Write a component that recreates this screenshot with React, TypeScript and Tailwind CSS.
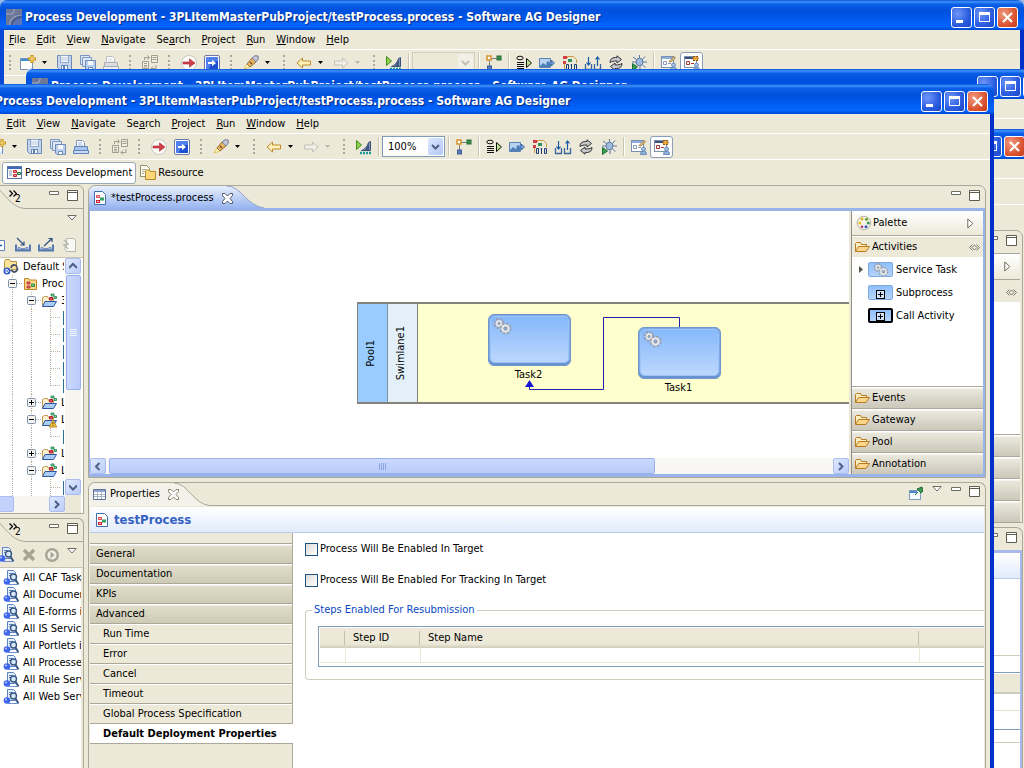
import { useId, type ReactNode } from "react";

/* ---------- icons ---------- */

function Svg({ w = 16, h = 16, children, className = "" }: { w?: number; h?: number; children: ReactNode; className?: string }) {
  return (
    <svg width={w} height={h} viewBox={`0 0 ${w} ${h}`} fill="none" aria-hidden="true" className={`shrink-0 ${className}`}>
      {children}
    </svg>
  );
}

const AppLogo = () => (
  <Svg>
    <rect width="16" height="16" fill="#4c5c86" />
    <path d="M0 0h16v5C9 5 5 9 4 16H0z" fill="#6d7897" />
    <path d="M0 5h5c2 0 3-1 3-5M4 16c0-6 5-10 12-10" stroke="#98a5c6" strokeWidth="1.2" />
    <path d="M7 16c0-4 4-7 9-7v7z" fill="#5a74b4" />
  </Svg>
);

const NewIcon = () => (
  <Svg>
    <rect x=".5" y="3.500" width="12" height="11" fill="#fff" stroke="#7a93b8" />
    <path d="M1 4h11v2H1z" fill="#3f8fd6" />
    <path d="M5 15c5 0 7-2 7-7v7z" fill="#cfe3f5" />
    <path d="M12 0v8M8 4h8" stroke="#c9921a" strokeWidth="3" />
    <path d="M12 1v6M9 4h6" stroke="#ffe68a" />
  </Svg>
);

const SaveIcon = () => (
  <Svg>
    <path d="M.5.5h14v14h-12l-2-2z" fill="#c4d5ec" stroke="#6d8bb8" />
    <rect x="3.500" y=".5" width="8" height="7" fill="#f4f8fd" stroke="#8fa8cb" />
    <path d="M4 3h7M4 5h7" stroke="#b8c9e0" />
    <rect x="4.500" y="10.500" width="6" height="4" fill="#f4f8fd" stroke="#6d8bb8" />
    <path d="M6 11h2v3H6z" fill="#5f7fb0" />
  </Svg>
);

const SaveAllIcon = () => (
  <Svg>
    <path d="M.5.5h9v9h-9z" fill="#dfe9f6" stroke="#7c97bf" />
    <path d="M2.500 2.500h9v9h-9z" fill="#dfe9f6" stroke="#7c97bf" />
    <path d="M5.500 5.500h10v10H7l-1.500-1.500z" fill="#bccfe9" stroke="#6d8bb8" />
    <path d="M8 6h5v4H8z" fill="#f4f8fd" />
    <path d="M8.500 12.500h4v3h-4z" fill="#fff" stroke="#6d8bb8" />
  </Svg>
);

const PrintIcon = ({ dim = false }: { dim?: boolean }) => (
  <Svg>
    <path d="M3.500 7.500v-6h6l2 2v4z" fill="#fff" stroke={dim ? "#b8bcc4" : "#7c97bf"} />
    <path d="M1.500 7.500h13v5h-13z" fill={dim ? "#dcdedf" : "#a9c3ec"} stroke={dim ? "#a9aeb6" : "#6183bb"} />
    <path d="M.5 11.500h15v3H.5z" fill={dim ? "#eceded" : "#c6d9f6"} stroke={dim ? "#a9aeb6" : "#6183bb"} />
    <path d="M5 4h4M5 6h5" stroke={dim ? "#d0d3d8" : "#a5bcdf"} />
  </Svg>
);

const TransformIcon = () => (
  <Svg>
    <path d="M9.500.5h6v7h-6zM.5 6.500h6v7h-6z" fill="#f2f0e4" stroke="#a19d8c" />
    <path d="M10.500 2.500h4M10.500 4.500h4M2 8.500h3M2 10.500h3M2 12h3" stroke="#a19d8c" />
    <path d="M2.500 5V2.500H7M5.500.5 7.500 2.500 5.500 4.500M14 10v3.500H9M11 11.500l-2 2 2 2" stroke="#a19d8c" />
  </Svg>
);

const StepRedIcon = () => (
  <Svg>
    <circle cx="8" cy="8" r="7.500" fill="#fbfbf8" stroke="#c9c8c0" />
    <path d="M2 7h6.500V3.800l5.500 4.200-5.500 4.200V9H2z" fill="#d0404a" stroke="#a82a34" strokeWidth=".6" />
  </Svg>
);

const StepBlueIcon = () => (
  <Svg>
    <rect x=".5" y=".5" width="15" height="15" rx="1.500" fill="#fff" stroke="#6a7aa4" />
    <rect x="2" y="2" width="12" height="12" fill="#1f4fd0" />
    <path d="M2 2h12v4c-5 0-8 2-9 8H2z" fill="#4f80ee" />
    <path d="M4 7h4V4.800L12 8l-4 3.200V9H4z" fill="#fff" />
  </Svg>
);

const TorchIcon = () => (
  <Svg>
    <path d="m1 14 3-5 3 3z" fill="#fff7c9" stroke="#e0c65a" />
    <path d="m4 9 5-6 4 4-6 5z" fill="#e8b464" stroke="#9c7040" />
    <path d="M9 3 12 .7l3.200.3.100 3L13 7z" fill="#c2c6d4" stroke="#7b7f96" />
    <path d="m7 7 2 2" stroke="#7a4e1c" strokeWidth="1.500" />
  </Svg>
);

const ArrowIcon = ({ dir, dim = false }: { dir: "l" | "r"; dim?: boolean }) => (
  <Svg>
    <path
      d={dir === "l" ? "M1 8l5.500-5v3H14.500v4H6.500v3z" : "M15 8L9.500 3v3H1.500v4h8v3z"}
      fill={dim ? "#f0efe8" : "#fdf0b8"}
      stroke={dim ? "#c3c1b6" : "#bd8a2d"}
    />
  </Svg>
);

const CompareIcon = () => (
  <Svg>
    <path d="M.5 1.500v9l5-4.500z" fill="#8fd34a" stroke="#3f8a1c" />
    <path d="M14.500 2.500v9H5.500c3-1 6-4 7-8z" fill="#7f97bb" stroke="#3a5278" />
    <path d="M9 11l4-7v7z" fill="#42597f" />
    <path d="M4 14h11" stroke="#1e9a98" strokeWidth="2.500" strokeDasharray="2 1" />
  </Svg>
);

const TreeIcon = () => (
  <Svg>
    <path d="M5 3.500h6M3.500 6v5" stroke="#7b7b74" />
    <rect x="1" y="1" width="4" height="4" fill="#fff" stroke="#d8902a" strokeWidth="1.500" />
    <rect x="11" y="1" width="4" height="4" fill="#3b8f4b" stroke="#276a36" />
    <rect x="1.500" y="11" width="4" height="4" fill="#5a7cbb" stroke="#3c5a94" />
  </Svg>
);

const StepsIcon = () => (
  <Svg>
    <ellipse cx="4" cy="3" rx="3.200" ry="1.800" stroke="#111" />
    <path d="M1 7.500h7M1 9.500h7M1 11.500h7M1 13.500h7" stroke="#111" strokeWidth="1.200" />
    <path d="M10.500 3.500v9l5-4.500z" fill="#b8e08a" stroke="#111" />
  </Svg>
);

const ExportImageIcon = () => (
  <Svg>
    <path d="M.5 3.500h11v9H.5z" fill="#b8d4f0" stroke="#5a82b2" />
    <path d="m1 12v-1l3-3 3 2 4-3v5z" fill="#4f7fb8" />
    <path d="M8 7h4.500V5l3 3-3 3V9H8z" fill="#6d9fdc" stroke="#2f5a94" strokeWidth=".7" />
  </Svg>
);

const BinaryIcon = () => (
  <Svg>
    <path d="M5.500 3V1.500h6l3 3V8M2.500 8v6" stroke="#c99a3c" />
    <path d="M1 1h4v3H1zM1 6h3v3H1z" fill="#d63c48" />
    <path d="M6 4h4v3H6z" fill="#31905a" />
    <path d="M4.500 9.500h2v5h-2zM9.500 9v6M12.500 9.500h2v5h-2zM8.500 10h1" stroke="#1c3b74" />
  </Svg>
);

const SyncTraysIcon = () => (
  <Svg w={18}>
    <path d="M1.500 9v5.500h6V9M10.500 9v5.500h6V9" stroke="#38659c" strokeWidth="1.300" />
    <path d="M4.500 2v8M2.500 7.500l2 2.500 2-2.500M13.500 11V2M11.500 4.500l2-2.500 2 2.500" stroke="#1c5aa6" strokeWidth="1.200" />
  </Svg>
);

const RefreshIcon = () => (
  <Svg>
    <path d="M2 7.500c0-3.500 2-5 5.500-5H9V.8l4.500 3.700L9 8V6c-3.500 0-5 .3-7 1.500z" fill="#c9c9cc" stroke="#303038" />
    <path d="M14 8.500c0 3.500-2 5-5.500 5H7v1.700L2.500 11.500 7 8v2c3.500 0 5-.3 7-1.500z" fill="#c9c9cc" stroke="#303038" />
  </Svg>
);

const BugIcon = () => (
  <Svg>
    <ellipse cx="8.500" cy="7" rx="3.500" ry="3.800" fill="#9fbce0" stroke="#5c78a6" />
    <path d="M8.500 3V0M5.500 4.500 2 2M5 7H1M11.500 4.500 14 1.500M12 7h4M11.500 10l3 2.500M9 11v4" stroke="#5c78a6" />
    <path d="M1.500 8.500v7l5-3.500z" fill="#35a050" stroke="#1f6f35" />
  </Svg>
);

const PerspectiveUserIcon = ({ gear = false }: { gear?: boolean }) => (
  <Svg>
    <rect x=".5" y="1.500" width="12" height="11" fill="#fff" stroke="#7d8fae" />
    <path d="M1 2h11v2H1z" fill={gear ? "#3a4f78" : "#8fb0dc"} />
    <path d="M2.500 6.500h3v3h-3zM7 8.500h3" stroke={gear ? "#a33" : "#8c9cb8"} />
    {gear ? (
      <path d="M9 1.500h5v4H9z" fill="#eda63b" stroke="#8b5412" strokeDasharray="2 1" />
    ) : (
      <path d="m8 6.500 5-5 1.500 1.500-4.500 4z" fill="#e9c27a" stroke="#8d7038" strokeWidth=".8" />
    )}
    <circle cx="12.500" cy="10" r="2" fill="#a9c3e4" stroke="#5c7fae" strokeWidth=".8" />
    <path d="M9.500 15.500c0-2.500 1-3.500 3-3.500s3 1 3 3.500z" fill="#8caed9" stroke="#5c7fae" strokeWidth=".8" />
  </Svg>
);

const ProcessPerspIcon = () => (
  <Svg>
    <rect x=".5" y="1.500" width="14" height="12" fill="#fff" stroke="#5a74a3" />
    <path d="M1 2h13v2H1z" fill="#3c67b8" />
    <path d="M2 6h3M2 8h3M2 10h3" stroke="#7e95bd" />
    <path d="M6.500 5.500h3v2h-3zM6.500 9.500h3v2h-3z" fill="#f5a0a6" stroke="#c4202e" />
    <path d="M10.500 7.500h3v2h-3z" fill="#9fd8b0" stroke="#1d7a41" />
  </Svg>
);

const ResourceIcon = () => (
  <Svg>
    <path d="M.5.5h6l3 3v8h-9z" fill="#fff" stroke="#9b8960" />
    <path d="M2 4.500h4M2 6.500h3M2 8.500h2" stroke="#b3a47c" />
    <path d="M5.500 6.500l1-1.500h3l1 1.500h5v8h-10z" fill="#fbd676" stroke="#b98a2c" />
  </Svg>
);

const ProcessFileIcon = () => (
  <Svg w={12} h={14}>
    <path d="M.5.5h8l3 3v10H.5z" fill="#fff" stroke="#3f6fae" />
    <path d="M2 4h4v3H2z" fill="#e0525e" />
    <path d="M2 9h4v3H2z" fill="#cf2233" />
    <path d="M6 6.500h4v3H6z" fill="#35a060" />
    <path d="M3 5h2v1H3zM3 10h2v1H3z" fill="#f7b6bb" />
  </Svg>
);

const CloseX = ({ dim = false }: { dim?: boolean }) => (
  <Svg w={11} h={11}>
    <path d="M.5.5h2.500L5.500 3 8 .5h2.500v2L8 5.500l2.500 3v2H8L5.500 8 3 10.500H.5v-2L3 5.500.5 2.500z" fill="#fff" stroke={dim ? "#85826f" : "#55586b"} />
  </Svg>
);

const ServiceFolder = () => (
  <Svg>
    <path d="M1.500 13V2.500l1-2h4l1 2h6V10z" fill="#fbe39b" stroke="#b8913c" />
    <circle cx="4" cy="12" r="3.500" fill="#3059d8" />
    <path d="M3 10.500h1.500l1 1.500-1 1.500H3z" stroke="#fff" />
    <path d="M8 9c1-4 5-4 6-1M14.500 8.500c0 5-5 6-6 2" stroke="#47506b" strokeWidth="1.800" />
  </Svg>
);

const ProjectFolder = () => (
  <Svg>
    <path d="M2.500 13.500V2.500h4l1 1.500h7v9.500z" fill="#fbd98a" stroke="#c08426" />
    <path d="M5 6h3v2H5zM5 10h3v2H5z" fill="#e0737a" stroke="#b02030" strokeWidth=".8" />
    <path d="M9.500 8h3v2.500h-3z" fill="#72c78a" stroke="#1b7a3c" strokeWidth=".8" />
  </Svg>
);

const OpenFolder = ({ warn = false }: { warn?: boolean }) => (
  <Svg>
    <path d="M1.500 13.500v-9l2-1h3l1 2h5v3" fill="#fdf0cf" stroke="#c19a55" />
    <path d="M1.500 13.500 4 8.500h11.500l-3 5z" fill="#a9cdf7" stroke="#2f57a0" />
    <path d="M8.500 4.500h3v2.500h-3z" fill="#ea5a68" stroke="#b01a2c" />
    <path d="M10 1h3v2h-3zM13 3.500h2.500v2H13z" fill="#7fd09a" stroke="#1f7d49" strokeWidth=".8" />
    {warn && <path d="m12 8 3.700 7H8.300z" fill="#ffd24a" stroke="#b9851a" />}
    {warn && <path d="M12 10.500v2M12 13.300v1" stroke="#503800" />}
  </Svg>
);

const DrawerFolder = () => (
  <Svg>
    <path d="M1.500 12.500v-8l1-1h4l1 2h5v2" fill="#fdeec0" stroke="#b77a22" />
    <path d="m1.500 12.500 3-5h11l-3.500 5z" fill="#fbd58a" stroke="#b77a22" />
  </Svg>
);

const QueryIcon = () => (
  <Svg>
    <path d="M4.500.5h6l2 2v9h-8z" fill="#e4effc" stroke="#5d83c2" />
    <path d="M6 3.500h4M6 5.500h3" stroke="#5d83c2" />
    <circle cx="10.500" cy="7" r="3" fill="#d6e8fb" stroke="#39567f" strokeWidth="1.400" />
    <path d="m12.500 9.500 3 5" stroke="#39567f" strokeWidth="2" />
    <circle cx="4" cy="11.500" r="3.300" fill="#3d66ec" />
    <circle cx="3" cy="10.500" r="1" fill="#b9caff" />
    <path d="M5 14.500h10" stroke="#6f8fd0" />
  </Svg>
);

const InTray = ({ out = false }: { out?: boolean }) => (
  <Svg>
    <path d="M1 7.500v6h14v-6" stroke="#5678b0" strokeWidth="2" />
    <path d="M3 12.500v-2h2l1 1h4l1-1h2v2z" fill="#9db8e0" stroke="#5678b0" strokeWidth=".7" />
    <path d={out ? "M6 9 14 1.500M10.500 1.500H14v3.500" : "M2 1l7 7M9 4.500V8H5.500"} stroke="#2f4d80" strokeWidth="1.200" />
  </Svg>
);

const ScrollDoc = () => (
  <Svg>
    <path d="M5.500 1.500h7l2 2v11h-9l-2-3 2-2z" fill="#f8f8f4" stroke="#b9b8ae" />
    <path d="m3 3 4 4-4 1 4 4" stroke="#b9b8ae" strokeWidth="1.500" />
  </Svg>
);

const PaletteIcon = () => (
  <Svg>
    <circle cx="8" cy="8" r="6.800" fill="#f6f3e6" stroke="#b5b2a2" />
    <circle cx="6" cy="4" r="1.500" fill="#e0b030" />
    <circle cx="10.500" cy="4.200" r="1.500" fill="#5aa02c" />
    <circle cx="12.300" cy="8" r="1.500" fill="#2f9a50" />
    <circle cx="10" cy="11.800" r="1.500" fill="#3458c8" />
    <circle cx="6" cy="11.800" r="1.400" fill="#b03a8a" />
    <circle cx="3.800" cy="8" r="1.500" fill="#e8c020" />
  </Svg>
);

const PinIcon = () => (
  <Svg w={14}>
    <rect x=".5" y="4.500" width="11" height="9" fill="#f4faff" stroke="#7d9cc0" />
    <path d="M1 5h7v2H1z" fill="#4b86cf" />
    <path d="m6 9 3-3M8 3l4 4 2-2-1-4z" fill="#3c9a50" stroke="#1f6a32" />
  </Svg>
);

const DrawerPin = () => (
  <Svg w={11} h={7}>
    <path d="M3.500.5.5 3.500l3 3M7.500.5l3 3-3 3M5.500 1 3 3.500 5.500 6 8 3.500z" stroke="#6f6d60" strokeWidth=".9" />
  </Svg>
);

const TriRight = () => (
  <Svg w={7} h={11}>
    <path d="M.8 1v9l5-4.500z" fill="#fff" stroke="#6f6d60" />
  </Svg>
);

const TriDown = () => (
  <Svg w={10} h={6}>
    <path d="M.8.5h8.400L5 5z" fill="#fff" stroke="#6f6d60" />
  </Svg>
);

const DropArrow = ({ dim = false }: { dim?: boolean }) => (
  <Svg w={5} h={3}>
    <path d="M0 0h5L2.500 3z" fill={dim ? "#b9b7aa" : "#000"} />
  </Svg>
);

const Gears = ({ big = false }: { big?: boolean }) => (
  <svg width={big ? 19 : 16} height={big ? 17 : 14} viewBox="0 0 19 17" fill="none" aria-hidden="true">
    <circle cx="6" cy="5.500" r="4" stroke="#9a9eaa" strokeWidth="3" strokeDasharray="1.800 1.340" />
    <circle cx="6" cy="5.500" r="3" fill="#f3f1ec" stroke="#e4e3e4" />
    <circle cx="6" cy="5.500" r="1.200" fill="#8fb4ea" stroke="#777c88" strokeWidth=".6" />
    <circle cx="12.500" cy="10.500" r="4.600" stroke="#9a9eaa" strokeWidth="3" strokeDasharray="2 1.610" />
    <circle cx="12.500" cy="10.500" r="3.800" fill="#f3f1ec" stroke="#e4e3e4" />
    <circle cx="12.500" cy="10.500" r="1.700" fill="#8fb4ea" stroke="#777c88" strokeWidth=".8" />
  </svg>
);

const PlusBox = () => (
  <Svg w={9} h={9}>
    <rect x=".5" y=".5" width="8" height="8" fill="#cfe3fd" stroke="#000" />
    <path d="M2 4.500h5M4.500 2v5" stroke="#000" />
  </Svg>
);

/* ---------- window frame ---------- */

function CaptionButtons() {
  const base = "flex h-[21px] w-[21px] items-center justify-center rounded-[3px] border border-white";
  return (
    <div className="flex gap-0.5">
      <button aria-label="Minimize" className={`${base} bg-[radial-gradient(circle_at_30%_30%,#6f97f8,#2a5be0_60%,#1c47c4)]`}>
        <Svg w={13} h={13}>
          <path d="M1 9h7v3H1z" fill="#fff" />
        </Svg>
      </button>
      <button aria-label="Maximize" className={`${base} bg-[radial-gradient(circle_at_30%_30%,#6f97f8,#2a5be0_60%,#1c47c4)]`}>
        <Svg w={13} h={13}>
          <path d="M1.500 2.500h10v8h-10z" stroke="#fff" />
          <path d="M1 1h11v3H1z" fill="#fff" />
        </Svg>
      </button>
      <button aria-label="Close" className={`${base} bg-[radial-gradient(circle_at_30%_30%,#f09a80,#dc5634_60%,#c23c1c)]`}>
        <Svg w={13} h={13}>
          <path d="m2 2 9 9M11 2l-9 9" stroke="#fff" strokeWidth="2" />
        </Svg>
      </button>
    </div>
  );
}

function DesktopWindow({ place, title, children }: { place: string; title?: string; children?: ReactNode }) {
  return (
    <section className={`absolute bottom-0 flex w-full flex-col overflow-hidden rounded-t-[7px] ${place}`}>
      <header className="flex h-[30px] shrink-0 items-center justify-between bg-[linear-gradient(#0a4fd0_0,#3f94fb_6%,#0b5fe8_14%,#0050dc_35%,#0057ec_60%,#0366ff_88%,#0048d0_100%)] pr-[6px] pl-[6px] pt-[4px]">
        <div className="flex items-center gap-[3px]">
          {title && <AppLogo />}
          {title && (
            <h1 className="text-[12px] leading-4 font-bold whitespace-nowrap text-white [text-shadow:1px_1px_1px_#0a2a80]">{title}</h1>
          )}
        </div>
        <CaptionButtons />
      </header>
      <div className="flex min-h-0 flex-1 flex-col border-x-4 border-l-[#0a48d8] border-r-[#0030c8] bg-[#ece9d8]">{children}</div>
    </section>
  );
}

const MENUS: [string, string, string][] = [
  ["", "F", "ile"],
  ["", "E", "dit"],
  ["", "V", "iew"],
  ["", "N", "avigate"],
  ["Se", "a", "rch"],
  ["", "P", "roject"],
  ["", "R", "un"],
  ["", "W", "indow"],
  ["", "H", "elp"],
];

function MenuBar() {
  return (
    <nav className="flex h-[19px] shrink-0 items-center gap-[11px] pl-[5px]">
      {MENUS.map(([a, b, c]) => (
        <button key={b + c} className="leading-[14px]">
          {a}
          <span className="underline">{b}</span>
          {c}
        </button>
      ))}
    </nav>
  );
}

/* ---------- tool bar ---------- */

function Tool({ label, children, pressed = false }: { label: string; children: ReactNode; pressed?: boolean }) {
  return (
    <button
      aria-label={label}
      className={`flex h-[22px] w-[23px] shrink-0 items-center justify-center ${pressed ? "rounded-[3px] border border-[#8ba0b8] bg-white" : ""}`}
    >
      {children}
    </button>
  );
}

const Drop = ({ label, dim }: { label: string; dim?: boolean }) => (
  <button aria-label={label} className="flex h-[22px] w-[14px] shrink-0 items-center pl-[3px]">
    <DropArrow dim={dim} />
  </button>
);

const Grip = ({ first = false }: { first?: boolean }) => (
  <span className={`flex shrink-0 justify-center ${first ? "w-3" : "w-4"}`}>
    <span className="h-[15px] border-l-2 border-dotted border-[#aca899]" />
  </span>
);

const Sep = () => (
  <span className="flex w-[7px] shrink-0 justify-center">
    <span className="h-[19px] border-r border-l border-r-white border-l-[#c9c5b2]" />
  </span>
);

function Toolbar({ zoom }: { zoom?: string }) {
  const off = !zoom;
  return (
    <div className="flex h-[26px] shrink-0 items-center border-t border-white">
      <Grip first />
      <Tool label="New"><NewIcon /></Tool>
      <Drop label="New options" />
      <Tool label="Save"><SaveIcon /></Tool>
      <Tool label="Save All"><SaveAllIcon /></Tool>
      <Tool label="Print"><PrintIcon dim={off} /></Tool>
      <Grip />
      <Tool label="Transform"><TransformIcon /></Tool>
      <Grip />
      <Tool label="Step"><StepRedIcon /></Tool>
      <Tool label="Run to end"><StepBlueIcon /></Tool>
      <Grip />
      <Tool label="Search"><TorchIcon /></Tool>
      <Drop label="Search options" />
      <Grip />
      <Tool label="Back"><ArrowIcon dir="l" /></Tool>
      <Drop label="Back history" />
      <Tool label="Forward"><ArrowIcon dir="r" dim /></Tool>
      <Drop label="Forward history" dim />
      <Grip />
      <Tool label="Analyze"><CompareIcon /></Tool>
      <Sep />
      <div className="relative flex shrink-0">
        <select
          aria-label="Zoom"
          disabled={off}
          className={`h-[21px] w-[63px] appearance-none rounded-none border pl-[5px] leading-[14px] outline-none ${off ? "border-[#d3d0c0] bg-[#ece9d8]" : "border-[#7f9db9] bg-white text-black"}`}
        >
          <option>{zoom ?? ""}</option>
        </select>
        <span
          className={`pointer-events-none absolute top-0.5 right-0.5 flex h-[17px] w-[15px] items-center justify-center rounded-[2px] ${off ? "bg-[#f2f0e6]" : "bg-[linear-gradient(135deg,#dbe6fe,#b4c8f6)]"}`}
        >
          <Svg w={9} h={6}>
            <path d="m1 1 3.500 3.500L8 1" stroke={off ? "#c5c2b3" : "#4d6185"} strokeWidth="2" />
          </Svg>
        </span>
      </div>
      <Sep />
      <Tool label="Layout"><TreeIcon /></Tool>
      <Sep />
      <Tool label="Steps"><StepsIcon /></Tool>
      <Tool label="Export image"><ExportImageIcon /></Tool>
      <Tool label="Generate"><BinaryIcon /></Tool>
      <Tool label="Synchronize"><SyncTraysIcon /></Tool>
      <Tool label="Refresh"><RefreshIcon /></Tool>
      <Tool label="Debug"><BugIcon /></Tool>
      <Sep />
      <Tool label="Analyst view"><PerspectiveUserIcon /></Tool>
      <Tool label="Developer view" pressed><PerspectiveUserIcon gear /></Tool>
    </div>
  );
}

/* ---------- view chrome ---------- */

const MinButton = () => (
  <button aria-label="Minimize view" className="mt-px shrink-0">
    <Svg w={10} h={4}>
      <path d="M.5.5h9v3h-9z" fill="#fff" stroke="#6f6d60" />
    </Svg>
  </button>
);

const MaxButton = () => (
  <button aria-label="Maximize view" className="shrink-0">
    <Svg w={11} h={11}>
      <path d="M.5.5h10v10H.5zM.5 2.500h10" fill="#fff" stroke="#5f5d50" />
    </Svg>
  </button>
);

const ViewButtons = () => (
  <div className="flex items-start gap-2">
    <MinButton />
    <MaxButton />
  </div>
);

function SideHeader() {
  return (
    <div className="relative flex h-6 shrink-0 items-start justify-between pt-1 pr-[5px] pl-[34px]">
      <svg className="absolute inset-0 h-full w-full" viewBox="0 0 108 24" preserveAspectRatio="none" fill="none" aria-hidden="true">
        <path d="M20 0c9 6 16 22 30 22.500H108" stroke="#aca899" />
      </svg>
      <button aria-label="Show 2 more views" className="relative flex items-start">
        <Svg w={8} h={7}>
          <path d="m.5.5 3 3-3 3M4.500.5l3 3-3 3" stroke="#000" strokeWidth="1.200" />
        </Svg>
        <span className="-ml-[2px] pt-[3px] text-[10px] leading-3">2</span>
      </button>
      <div className="relative">
        <ViewButtons />
      </div>
    </div>
  );
}

const chevrons = {
  left: "M5.500 1 2 4.500 5.500 8",
  right: "M2 1l3.500 3.500L2 8",
  up: "M0 6l4-4 4 4",
  down: "M0 2.500l4 4 4-4",
};

const ScrollButton = ({ dir }: { dir: keyof typeof chevrons }) => (
  <button
    aria-label={`Scroll ${dir}`}
    className="flex h-4 w-4 shrink-0 items-center justify-center rounded-[2px] border border-[#a9bdf0] bg-[linear-gradient(135deg,#dfe8ff,#b9ccfa)]"
  >
    <Svg w={8} h={9}>
      <path d={chevrons[dir]} stroke="#4d6185" strokeWidth="2" />
    </Svg>
  </button>
);

/* ---------- left column ---------- */

type Row = { level: number; kind: "root" | "project" | "folder" | "warn" | "leaf"; label?: string; open?: boolean; last?: boolean };

const TREE: Row[] = [
  { level: 0, kind: "root", label: "Default Server" },
  { level: 1, kind: "project", label: "Processes", open: true },
  { level: 2, kind: "folder", label: "3PLItemMaster", open: true },
  { level: 3, kind: "leaf" },
  { level: 3, kind: "leaf" },
  { level: 3, kind: "leaf" },
  { level: 3, kind: "leaf" },
  { level: 3, kind: "leaf", last: true },
  { level: 2, kind: "folder", label: "Loan", open: false },
  { level: 2, kind: "warn", label: "Loan", open: true },
  { level: 3, kind: "leaf", last: true },
  { level: 2, kind: "folder", label: "Loan", open: false },
  { level: 2, kind: "folder", label: "Loan", open: true },
  { level: 3, kind: "leaf" },
];

function TreeRow({ row }: { row: Row }) {
  const guides = Math.max(0, row.level - 1);
  return (
    <li className="flex h-[17px] items-center whitespace-nowrap">
      <span className="w-[19px] shrink-0" />
      {Array.from({ length: guides }, (_, i) => (
        <span key={i} className="flex h-full w-[19px] shrink-0 justify-center">
          <span className="border-l border-dotted border-[#b5b2a4]" />
        </span>
      ))}
      {row.level > 0 && (
        <span className="relative flex h-full w-[19px] shrink-0 items-center justify-center">
          <span className={`absolute top-0 left-[9px] border-l border-dotted border-[#b5b2a4] ${row.last ? "h-[9px]" : "h-full"}`} />
          <span className="absolute right-0 left-[9px] border-t border-dotted border-[#b5b2a4]" />
          {row.open !== undefined && (
            <button aria-label={row.open ? "Collapse" : "Expand"} className="relative">
              <Svg w={9} h={9}>
                <rect x=".5" y=".5" width="8" height="8" rx="1" fill="#f4f3ee" stroke="#7b90a8" />
                <path d={row.open ? "M2 4.500h5" : "M2 4.500h5M4.500 2v5"} stroke="#000" />
              </Svg>
            </button>
          )}
        </span>
      )}
      {row.kind === "root" && <ServiceFolder />}
      {row.kind === "project" && <ProjectFolder />}
      {row.kind === "folder" && <OpenFolder />}
      {row.kind === "warn" && <OpenFolder warn />}
      {row.kind === "leaf" && <span className="ml-[3px] h-[14px] w-3 border border-[#2f6f93] bg-white" />}
      {row.label && <span className="pl-1 leading-[14px]">{row.label}</span>}
    </li>
  );
}

const QUERIES = ["All CAF Tasks", "All Documents", "All E-forms in", "All IS Services", "All Portlets in", "All Processes", "All Rule Services", "All Web Services"];

function LeftColumn() {
  return (
    <div className="flex w-[110px] shrink-0 flex-col gap-1">
      <section className="flex h-[329px] shrink-0 flex-col overflow-hidden rounded-tr-[6px] border border-[#aca899]">
        <SideHeader />
        <div className="flex h-[48px] shrink-0 flex-col items-end justify-between border-b border-[#c8c4b2] pt-[5px] pr-[6px] pb-1">
          <button aria-label="View menu"><TriDown /></button>
          <div className="flex gap-[7px]">
            <button aria-label="Collapse all">
              <Svg>
                <path d="M1.500 3.500h11v10h-11z" fill="#fff" stroke="#5f86b4" />
                <path d="M4 8.500h6" stroke="#25539a" strokeWidth="1.500" />
              </Svg>
            </button>
            <button aria-label="Import"><InTray /></button>
            <button aria-label="Export"><InTray out /></button>
            <button aria-label="Script"><ScrollDoc /></button>
          </div>
        </div>
        <div className="flex min-h-0 flex-1 bg-white pr-0.5">
          <div className="flex min-w-0 flex-1 flex-col">
            <ul className="mr-px min-h-0 flex-1 overflow-hidden bg-white pl-[9px]">
              {TREE.map((r, i) => (
                <TreeRow key={i} row={r} />
              ))}
            </ul>
            <div className="flex h-[17px] shrink-0 items-start justify-between bg-[#f6f5f0]">
              <span className="h-4 w-[39px] rounded-[2px] border border-[#a9bdf0] bg-[#c3d2fb]" />
              <ScrollButton dir="right" />
            </div>
          </div>
          <div className="flex w-4 shrink-0 flex-col items-center bg-[#f6f5f0]">
            <ScrollButton dir="up" />
            <span className="mt-px flex h-[115px] w-[15px] flex-col items-center justify-center gap-px rounded-[2px] border border-[#98b0ee] bg-[linear-gradient(90deg,#cbd9ff,#b9cbfa)]">
              {[0, 1, 2, 3].map((i) => (
                <span key={i} className="h-px w-[7px] bg-[#eef3ff]" />
              ))}
            </span>
            <span className="flex-1" />
            <ScrollButton dir="down" />
            <span className="h-[18px] w-full bg-[#ece9d8]" />
          </div>
        </div>
      </section>

      <section className="flex min-h-0 flex-1 flex-col overflow-hidden rounded-tr-[6px] border border-b-0 border-[#aca899]">
        <SideHeader />
        <div className="flex h-[25px] shrink-0 items-center justify-end gap-[7px] border-b border-[#c8c4b2] pr-[6px]">
          <button aria-label="Queries"><QueryIcon /></button>
          <button aria-label="Remove">
            <Svg>
              <path d="m3 3 10 10M13 3 3 13" stroke="#a8a595" strokeWidth="3.500" />
            </Svg>
          </button>
          <button aria-label="Run query">
            <Svg>
              <circle cx="8" cy="8" r="5.800" fill="#f2f0e6" stroke="#a8a595" strokeWidth="2.500" />
              <path d="M6.500 4.500v7l4-3.500z" fill="#a8a595" />
            </Svg>
          </button>
          <button aria-label="View menu" className="mb-2"><TriDown /></button>
        </div>
        <ul className="mr-[2px] min-h-0 flex-1 overflow-hidden bg-white pt-px pl-[28px]">
          {QUERIES.map((q) => (
            <li key={q} className="flex h-[17px] items-center gap-1 leading-[14px] whitespace-nowrap">
              <QueryIcon />
              {q}
            </li>
          ))}
        </ul>
      </section>
    </div>
  );
}

/* ---------- palette ---------- */

const DRAWERS = ["Events", "Gateway", "Pool", "Annotation"];
const drawerClass = "flex h-[22px] shrink-0 items-center gap-0.5 border-t border-[#aca899] bg-[linear-gradient(#fff_0,#fff_1px,#eae7dc_2px,#cbc8ba_100%)]";

function Palette() {
  const tile = "flex h-[15px] w-[25px] items-center justify-center rounded-[2px] bg-[linear-gradient(#8fc0fd,#b5d3fb)]";
  return (
    <aside className="flex w-[132px] shrink-0 flex-col border-l border-[#8f8f8a] bg-white">
      <div className="flex h-[25px] shrink-0 items-center justify-between border-b border-[#aca899] bg-[linear-gradient(#fff,#ece9d8)] pr-[9px] pl-1">
        <h2 className="flex items-center gap-px">
          <PaletteIcon />
          Palette
        </h2>
        <button aria-label="Hide palette"><TriRight /></button>
      </div>
      <button className="mt-px flex h-5 shrink-0 items-center justify-between bg-[#ece9d8] pr-[3px] pl-0.5">
        <span className="flex items-center gap-0.5">
          <DrawerFolder />
          Activities
        </span>
        <DrawerPin />
      </button>
      <ul className="flex flex-1 flex-col pt-px">
        <li>
          <button className="flex h-[23px] items-center">
            <span className="flex w-4 justify-center pl-px">
              <Svg w={4} h={7}>
                <path d="M0 0v7l4-3.500z" fill="#55534a" />
              </Svg>
            </span>
            <span className={`${tile} border border-[#7fa9df]`}><Gears /></span>
            <span className="pl-[3px]">Service Task</span>
          </button>
        </li>
        <li>
          <button className="flex h-[23px] items-center pl-4">
            <span className={`${tile} border border-[#7fa9df] pt-[3px]`}><PlusBox /></span>
            <span className="pl-[3px]">Subprocess</span>
          </button>
        </li>
        <li>
          <button className="flex h-[23px] items-center pl-4">
            <span className={`${tile} border-2 border-black pt-px`}><PlusBox /></span>
            <span className="pl-[3px]">Call Activity</span>
          </button>
        </li>
      </ul>
      {DRAWERS.map((d) => (
        <button key={d} className={`${drawerClass} pl-0.5`}>
          <DrawerFolder />
          {d}
        </button>
      ))}
    </aside>
  );
}

/* ---------- process diagram ---------- */

function TaskNode({ name, place }: { name: string; place: string }) {
  return (
    <div className={`absolute flex w-[83px] flex-col items-center ${place}`}>
      <div className="h-[52px] w-full rounded-[6px] border border-[#6f97cc] bg-[#7ea9e4] p-[2px] shadow-[inset_0_-2px_0_#6792cf]">
        <div className="h-[45px] rounded-[4px] bg-[linear-gradient(#86b9fb,#bcd7fd)] pt-px pl-[2px] shadow-[0_0_0_1px_#9cc4f8]">
          <Gears big />
        </div>
      </div>
      <span className="pt-0.5 pr-0.5 leading-[14px]">{name}</span>
    </div>
  );
}

function Diagram() {
  return (
    <div className="relative min-h-0 flex-1 overflow-hidden bg-white">
      <div className="absolute top-[91px] right-0 left-[267px] flex h-[102px] border-2 border-r-0 border-l-[1px] border-[#83837c] bg-[#ffffce]">
        <div className="flex w-[30px] shrink-0 items-center justify-center border-r border-[#7d8ea3] bg-[#99ccff] pr-1">
          <span className="[writing-mode:vertical-rl] rotate-180">Pool1</span>
        </div>
        <div className="flex w-[30px] shrink-0 items-center justify-center border-r border-[#83837c] bg-[#e3eff9] pr-1">
          <span className="[writing-mode:vertical-rl] rotate-180">Swimlane1</span>
        </div>
      </div>
      <svg className="absolute top-[100px] left-[430px]" width="170" height="90" viewBox="0 0 170 90" fill="none" aria-hidden="true">
        <path d="M159.500 16V6.500H83.500V78.500H9.500V74" stroke="#2020b0" />
        <path d="M9.500 69 5 76h9z" fill="#1818d8" />
      </svg>
      <TaskNode name="Task2" place="top-[103px] left-[398px]" />
      <TaskNode name="Task1" place="top-[116px] left-[548px]" />
    </div>
  );
}

function Editor() {
  const id = useId();
  return (
    <section className="flex h-[293px] shrink-0 flex-col rounded-t-[7px] border border-[#aca899]">
      <div className="relative flex h-[22px] shrink-0 items-start justify-between pr-[5px] pl-[5px]">
        <svg className="absolute top-0 left-0" width="176" height="22" viewBox="0 0 176 22" aria-hidden="true">
          <defs>
            <linearGradient id={id} x1="0" y1="0" x2="0" y2="1">
              <stop offset="0" stopColor="#e8effc" />
              <stop offset="1" stopColor="#99b5f1" />
            </linearGradient>
          </defs>
          <path d="M0 22V7q0-7 7-7h131c14 0 20 20 37 22z" fill={`url(#${id})`} />
          <path d="M138 0c14 0 20 20 37 22" fill="none" stroke="#8fa3cc" />
        </svg>
        <div className="relative flex h-full items-center gap-2 pt-0.5">
          <h2 className="flex items-center gap-[5px]">
            <ProcessFileIcon />
            *testProcess.process
          </h2>
          <button aria-label="Close editor"><CloseX /></button>
        </div>
        <div className="pt-1"><ViewButtons /></div>
      </div>
      <div className="flex min-h-0 flex-1 border-[#99b4ea] border-t-[3px] border-r-2 border-b-[3px] border-l-[1px]">
        <div className="flex min-w-0 flex-1 flex-col">
          <Diagram />
          <div className="flex h-4 shrink-0 items-center bg-[#f8f7f3]">
            <ScrollButton dir="left" />
            <span className="ml-[3px] flex h-4 w-[72%] items-center justify-center gap-px rounded-[2px] border border-[#98b0ee] bg-[linear-gradient(#cbd9ff,#b9cbfa)]">
              {[0, 1, 2, 3].map((i) => (
                <span key={i} className="h-[7px] w-px bg-[#8ea6e0]" />
              ))}
            </span>
            <span className="flex-1" />
            <ScrollButton dir="right" />
          </div>
        </div>
        <span className="w-0.5 shrink-0 bg-[#ece9d8]" />
        <Palette />
      </div>
    </section>
  );
}

/* ---------- properties ---------- */

const SECTIONS = ["General", "Documentation", "KPIs", "Advanced"];
const SUBSECTIONS = ["Run Time", "Error", "Cancel", "Timeout", "Global Process Specification"];

function CheckRow({ id, label }: { id: string; label: string }) {
  return (
    <div className="flex h-[14px] items-center gap-[2px]">
      <input
        type="checkbox"
        id={id}
        className="m-0 h-[13px] w-[13px] shrink-0 appearance-none border border-[#1c5180] bg-[linear-gradient(135deg,#dcdcd7,#fff)]"
      />
      <label htmlFor={id} className="leading-[14px] whitespace-nowrap">{label}</label>
    </div>
  );
}

function Properties() {
  return (
    <section className="flex min-h-0 flex-1 flex-col rounded-t-[7px] border border-b-0 border-[#aca899]">
      <div className="relative flex h-[23px] shrink-0 items-start justify-between border-b border-[#aca899] pr-[5px] pl-1">
        <svg className="absolute top-0 left-0" width="122" height="23" viewBox="0 0 122 23" aria-hidden="true">
          <path d="M0 23V7q0-7 7-7h78c14 0 20 22 36 22.500V23z" fill="#f3f2ea" />
          <path d="M85 0c14 0 20 22 36 22.500" fill="none" stroke="#aca899" />
        </svg>
        <div className="relative flex h-[22px] items-center gap-2">
          <h2 className="flex items-center gap-1">
            <Svg w={13} h={11}>
              <path d="M.5.5h12v10H.5z" fill="#fff" stroke="#5d7196" />
              <path d="M1 1h11v2H1z" fill="#8ea6cf" />
              <path d="M1 5.500h11M1 7.500h11M4.500 3v7M8.500 3v7" stroke="#a8b4ca" />
            </Svg>
            Properties
          </h2>
          <button aria-label="Close Properties"><CloseX dim /></button>
        </div>
        <div className="flex items-start gap-[9px] pt-[3px]">
          <button aria-label="Pin view"><PinIcon /></button>
          <button aria-label="View menu"><TriDown /></button>
          <ViewButtons />
        </div>
      </div>
      <div className="mx-px mt-px flex h-[26px] shrink-0 items-center gap-[6px] border-b border-[#b5cde8] bg-[linear-gradient(#fff,#e1ebfc)] pl-[6px]">
        <ProcessFileIcon />
        <h2 className="text-[13px] leading-4 font-bold text-[#3461c1]">testProcess</h2>
      </div>
      <div className="mx-px flex min-h-0 flex-1">
        <nav className="flex w-[203px] shrink-0 flex-col">
          <span className="h-[10px] shrink-0 border-r border-[#aca899]" />
          {SECTIONS.map((s) => (
            <button key={s} className="h-5 shrink-0 border-t border-r border-[#aca899] bg-[linear-gradient(#fff_0,#fff_1px,#e0ddca_2px,#cdcab5_100%)] pl-1.5 text-left leading-[14px]">
              {s}
            </button>
          ))}
          {SUBSECTIONS.map((s) => (
            <button key={s} className="h-5 shrink-0 border-t border-r border-[#aca899] bg-[linear-gradient(#fff_0,#fff_1px,#ece9d8_1px)] pl-[13px] text-left leading-[14px]">
              {s}
            </button>
          ))}
          <button className="h-[21px] shrink-0 border-y border-[#aca899] bg-white pl-[13px] text-left leading-[14px] font-bold whitespace-nowrap">
            Default Deployment Properties
          </button>
          <span className="flex-1 border-r border-[#aca899]" />
        </nav>
        <div className="flex min-w-0 flex-1 flex-col overflow-hidden bg-white pt-[9px] pl-3">
          <CheckRow id="enable-target" label="Process Will Be Enabled In Target" />
          <div className="h-[17px] shrink-0" />
          <CheckRow id="enable-tracking" label="Process Will Be Enabled For Tracking In Target" />
          <fieldset className="mt-4 min-w-0 shrink-0 rounded-l-[4px] border border-r-0 border-[#cfcdc0] pb-3 pl-3">
            <legend className="-ml-1.5 px-0.5 leading-[14px] text-[#0a48c4]">Steps Enabled For Resubmission</legend>
            <div className="mt-[9px] h-[41px] border border-r-0 border-[#7f9db9] bg-white pl-px pt-px">
              <table className="w-full table-fixed border-collapse text-left">
                <colgroup>
                  <col className="w-[25px]" />
                  <col className="w-[75px]" />
                  <col />
                  <col className="w-[65px]" />
                </colgroup>
                <thead>
                  <tr className="h-5 bg-[linear-gradient(#ece9d8_0,#ece9d8_16px,#cfccba_20px)]">
                    {["", "Step ID", "Step Name", ""].map((h, i) => (
                      <th key={i} className="p-0 font-normal">
                        <span className={`flex h-[14px] items-center pl-2 ${i < 3 ? "border-r border-[#c3c0ae]" : ""}`}>{h}</span>
                      </th>
                    ))}
                  </tr>
                </thead>
                <tbody>
                  <tr className="h-[14px] border-b border-[#ece9d8]">
                    <td className="border-r border-[#ece9d8] p-0" />
                    <td className="border-r border-[#ece9d8] p-0" />
                    <td className="border-r border-[#ece9d8] p-0" />
                    <td className="p-0" />
                  </tr>
                </tbody>
              </table>
            </div>
          </fieldset>
        </div>
      </div>
    </section>
  );
}

/* ---------- window uncovered along the right side ---------- */

function BackgroundEdge() {
  return (
    <div className="mr-1 ml-auto flex min-h-0 w-[60px] flex-1 flex-col gap-[4px]">
      <section className="flex h-[293px] shrink-0 flex-col rounded-tr-[7px] border border-[#aca899] pr-0.5">
        <div className="flex h-[23px] shrink-0 justify-end border-b border-[#aca899] pt-1 pr-[3px]">
          <ViewButtons />
        </div>
        <div className="flex h-[26px] shrink-0 items-center justify-end border-b border-[#aca899] bg-[linear-gradient(#fff,#ece9d8)] pr-[9px]">
          <TriRight />
        </div>
        <div className="mt-0.5 flex h-5 shrink-0 items-center justify-end bg-[#ece9d8] pr-[3px]">
          <DrawerPin />
        </div>
        <div className="flex-1 bg-white" />
        {DRAWERS.map((d) => (
          <span key={d} className={drawerClass} />
        ))}
      </section>
      <section className="flex min-h-0 flex-1 flex-col rounded-tr-[7px] border border-b-0 border-[#aca899]">
        <div className="flex h-[22px] shrink-0 justify-end pt-1 pr-[5px]">
          <ViewButtons />
        </div>
        <div className="flex min-h-0 flex-1 flex-col border-t-[3px] border-r-2 border-[#a9b9ea] bg-white">
          <div className="h-[26px] shrink-0 border-b border-[#b5cde8] bg-[linear-gradient(#fff,#e1ebfc)]" />
          <div className="h-[77px] shrink-0 border-b border-[#cfcdc0]" />
          <div className="h-[17px] shrink-0 border-b border-[#7f9db9]" />
          <div className="mt-px h-5 shrink-0 border-b-2 border-[#cfccba] bg-[#ece9d8]" />
          <div className="h-[17px] shrink-0 border-b border-[#e3e1d4]" />
          <div className="h-[19px] shrink-0 border-b border-[#7f9db9]" />
          <div className="h-[13px] shrink-0 border-b border-[#cfcdc0]" />
        </div>
      </section>
    </div>
  );
}

/* ---------- page ---------- */

const TITLE = "Process Development - 3PLItemMasterPubProject/testProcess.process - Software AG Designer";

export default function App() {
  return (
    <main className="relative h-screen overflow-hidden bg-[#9db8e4] text-[11px] leading-[14px] text-black [font-family:'DejaVu_Sans_Condensed','DejaVu_Sans',sans-serif]">
      <DesktopWindow place="top-0 left-0" title={TITLE}>
        <MenuBar />
        <Toolbar />
        <div className="border-t border-white" />
      </DesktopWindow>

      <DesktopWindow place="top-[69px] left-[26px]" title={TITLE}>
        <div className="h-5 shrink-0 border-b border-white" />
      </DesktopWindow>

      <DesktopWindow place="top-[129px] left-[7px]">
        <div className="h-5 shrink-0 border-b border-white" />
        <div className="h-[26px] shrink-0 border-b border-white" />
        <div className="h-[25px] shrink-0" />
        <BackgroundEdge />
      </DesktopWindow>

      <DesktopWindow place="top-[84px] -left-[30px]" title={TITLE}>
        <MenuBar />
        <Toolbar zoom="100%" />
        <div className="flex h-[26px] shrink-0 items-center gap-1 border-t border-white pl-[28px]">
          <button className="flex h-[22px] items-center gap-0.5 rounded-[3px] border border-[#9aa9b8] bg-white pr-[3px] pl-1">
            <ProcessPerspIcon />
            Process Development
          </button>
          <button className="flex h-[22px] items-center gap-0.5">
            <ResourceIcon />
            Resource
          </button>
        </div>
        <div className="flex min-h-0 flex-1 gap-1 pr-1">
          <LeftColumn />
          <div className="flex min-w-0 flex-1 flex-col gap-1">
            <Editor />
            <Properties />
          </div>
        </div>
      </DesktopWindow>
    </main>
  );
}
